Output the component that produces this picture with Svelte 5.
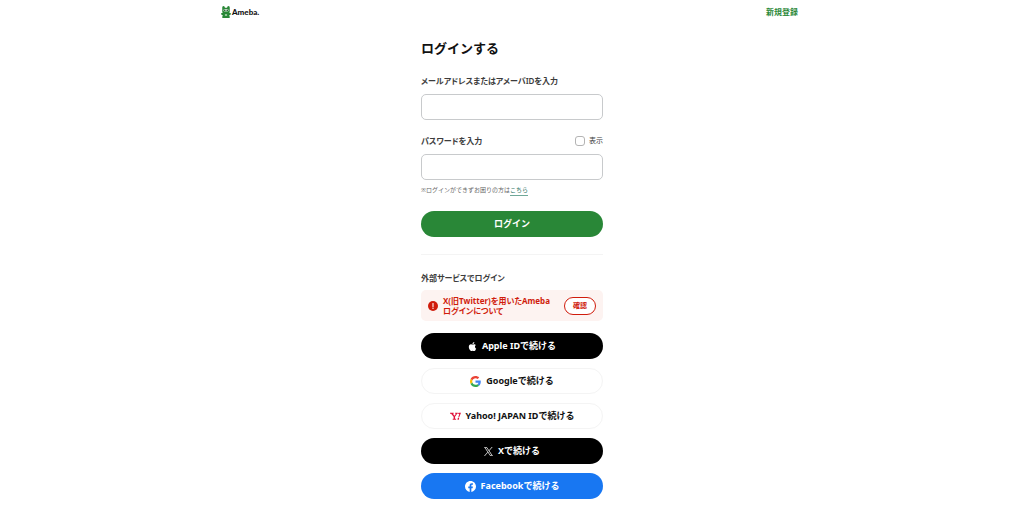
<script lang="ts">
	type Provider = {
		id: 'apple' | 'google' | 'yahoo' | 'x' | 'facebook';
		label: string;
	};

	const providers: Provider[] = [
		{ id: 'apple', label: 'Apple IDで続ける' },
		{ id: 'google', label: 'Googleで続ける' },
		{ id: 'yahoo', label: 'Yahoo! JAPAN IDで続ける' },
		{ id: 'x', label: 'Xで続ける' },
		{ id: 'facebook', label: 'Facebookで続ける' }
	];

	let account = $state('');
	let password = $state('');
	let showPassword = $state(false);

	function handleSubmit(event: SubmitEvent) {
		event.preventDefault();
	}
</script>

<div class="page" lang="ja">
	<header class="header">
		<a class="logo" href="/">
			<svg class="logo-mark" viewBox="0 0 20 24" aria-hidden="true">
				<path
					d="M5 0c1.600 0 2.600 1.500 2.800 3.500h4.400C12.400 1.500 13.400 0 15 0c1.700 0 2.500 1.600 2.500 3.500V11c0 1.200-.5 2-1.200 2.700l2.200.3c1 .2 1.500 1 1.300 2-.3 1.300-1.500 2-3.300 2l1 4c.3 1.300-.4 2-1.500 2H4c-1.100 0-1.800-.7-1.500-2l1-4c-1.800 0-3-.7-3.300-2-.2-1 .3-1.800 1.300-2l2.200-.3C3 13 2.500 12.200 2.500 11V3.500C2.500 1.600 3.300 0 5 0z"
					fill="#298737"
				/>
				<rect x="5" y="6" width="10" height="5" rx="2.500" fill="#cfe6d2" />
				<circle cx="7.500" cy="8.500" r="1.500" fill="#17401e" />
				<circle cx="12.500" cy="8.500" r="1.500" fill="#17401e" />
				<ellipse cx="10" cy="18" rx="2.500" ry="2" fill="#a5d0aa" />
			</svg>
			<span>Ameba.</span>
		</a>
		<a class="signup" href="/signup">新規登録</a>
	</header>

	<main class="login">
		<h1>ログインする</h1>

		<form onsubmit={handleSubmit}>
			<div class="label-row">
				<label for="account">メールアドレスまたはアメーバIDを入力</label>
			</div>
			<input id="account" class="field" type="text" bind:value={account} />

			<div class="label-row second">
				<label for="password">パスワードを入力</label>
				<label class="show">
					<input type="checkbox" bind:checked={showPassword} />
					表示
				</label>
			</div>
			<input
				id="password"
				class="field"
				type={showPassword ? 'text' : 'password'}
				bind:value={password}
			/>

			<p class="help">※ログインができずお困りの方は<a href="/help">こちら</a></p>
			<button class="pill submit" type="submit">ログイン</button>
		</form>

		<section class="external">
			<h2>外部サービスでログイン</h2>

			<div class="notice">
				<svg class="alert" viewBox="0 0 20 20" aria-hidden="true">
					<circle cx="10" cy="10" r="10" fill="#d01c0c" />
					<path d="M10 5v6" stroke="#fff" stroke-width="2.200" stroke-linecap="round" />
					<circle cx="10" cy="14.600" r="1.400" fill="#fff" />
				</svg>
				<p>X(旧Twitter)を用いたAmeba<br />ログインについて</p>
				<button class="confirm" type="button">確認</button>
			</div>

			<div class="providers">
				{#each providers as provider (provider.id)}
					<button class="pill {provider.id}" type="button">
						{#if provider.id === 'apple'}
							<svg class="icon small" viewBox="0 0 24 24" aria-hidden="true">
								<path
									fill="currentColor"
									d="M12.150 6.900c-.95 0-2.420-1.080-3.960-1.040-2.040.03-3.910 1.180-4.960 3.010-2.120 3.680-.55 9.100 1.520 12.090 1.010 1.450 2.210 3.090 3.790 3.040 1.520-.07 2.090-.99 3.940-.99 1.830 0 2.350.99 3.960.95 1.640-.03 2.680-1.480 3.680-2.950 1.160-1.690 1.640-3.320 1.660-3.410-.04-.01-3.180-1.220-3.220-4.860-.03-3.040 2.480-4.490 2.600-4.560-1.430-2.090-3.620-2.320-4.390-2.380-2-.16-3.680 1.090-4.610 1.090zM15.530 3.830c.84-1.010 1.400-2.430 1.250-3.830-1.210.05-2.660.81-3.530 1.820-.78.9-1.450 2.340-1.270 3.710 1.340.1 2.710-.69 3.560-1.700"
								/>
							</svg>
						{:else if provider.id === 'google'}
							<svg class="icon" viewBox="0 0 48 48" aria-hidden="true">
								<path fill="#ea4335" d="M24 9.500c3.540 0 6.710 1.220 9.210 3.600l6.850-6.850C35.900 2.380 30.470 0 24 0 14.620 0 6.510 5.380 2.560 13.220l7.980 6.190C12.430 13.720 17.740 9.500 24 9.500z" />
								<path fill="#4285f4" d="M46.980 24.550c0-1.570-.15-3.090-.38-4.550H24v9.020h12.940c-.58 2.960-2.260 5.480-4.780 7.180l7.730 6c4.510-4.180 7.090-10.360 7.090-17.650z" />
								<path fill="#fbbc05" d="M10.530 28.590c-.48-1.450-.76-2.990-.76-4.590s.27-3.140.76-4.590l-7.980-6.190C.92 16.460 0 20.120 0 24s.92 7.540 2.560 10.780l7.970-6.190z" />
								<path fill="#34a853" d="M24 48c6.480 0 11.930-2.130 15.890-5.810l-7.730-6c-2.150 1.450-4.920 2.300-8.160 2.300-6.260 0-11.570-4.220-13.470-9.910l-7.980 6.190C6.510 42.620 14.620 48 24 48z" />
							</svg>
						{:else if provider.id === 'yahoo'}
							<svg class="icon" viewBox="0 0 24 18" aria-hidden="true">
								<path
									fill="#e0103a"
									d="M0 1h8v2H6.500l3.200 4.500L13 3h-1.800V1H17v2h-1.400L11 9.500V14h2.300v2H5.900v-2h2V9.700L2.300 3H0z"
								/>
								<path fill="#e0103a" d="M18.500 1H24l-4.200 10h-2L20.300 3.300h-2.600zM17 12.500h3l-.7 3.500h-3z" />
							</svg>
						{:else if provider.id === 'x'}
							<svg class="icon small" viewBox="0 0 24 24" aria-hidden="true">
								<path
									fill="currentColor"
									d="M14.230 10.160 22.980 0h-2.070l-7.600 8.820L7.250 0H.25l9.170 13.340L.25 24h2.070l8.020-9.320L16.750 24h7l-9.520-13.840zm-2.840 3.300-.93-1.330L3.070 1.560h3.180l5.970 8.530.93 1.330 7.760 11.090h-3.180l-6.340-9.050z"
								/>
							</svg>
						{:else}
							<svg class="icon" viewBox="0 0 24 24" aria-hidden="true">
								<path
									fill="currentColor"
									d="M24 12.070C24 5.410 18.630 0 12 0S0 5.410 0 12.070C0 18.100 4.390 23.090 10.130 24v-8.440H7.080v-3.490h3.050V9.410c0-3.020 1.790-4.690 4.530-4.690 1.310 0 2.680.23 2.680.23v2.970h-1.510c-1.490 0-1.960.93-1.960 1.890v2.260h3.330l-.53 3.490h-2.800V24C19.610 23.090 24 18.100 24 12.070z"
								/>
							</svg>
						{/if}
						<span>{provider.label}</span>
					</button>
				{/each}
			</div>
		</section>
	</main>
</div>

<style>
	:global(body) {
		background: #fff;
	}

	.page,
	button,
	input {
		font-family: 'Noto Sans', 'Noto Sans CJK JP', sans-serif;
	}

	.page {
		color: #3c3c3c;
		font-size: 8px;
		line-height: 12px;
	}

	h1,
	h2,
	p {
		margin: 0;
	}

	button {
		cursor: pointer;
	}

	.header {
		box-sizing: border-box;
		display: flex;
		align-items: center;
		justify-content: space-between;
		max-width: 582px;
		height: 24px;
		margin: 0 auto;
		padding-right: 5px;
	}

	.header a {
		text-decoration: none;
	}

	.logo {
		display: flex;
		align-items: center;
		gap: 1px;
		color: #111;
		font-family: Lato, 'Noto Sans', sans-serif;
		font-weight: 900;
	}

	.logo-mark {
		width: 10px;
		height: 12px;
	}

	.signup {
		color: #298737;
		font-weight: 700;
	}

	.login {
		max-width: 182px;
		margin: 0 auto;
		padding: 14px 0;
	}

	h1 {
		color: #111;
		font-size: 13px;
		font-weight: 700;
		line-height: 20px;
		margin-bottom: 17px;
	}

	h2,
	.label-row {
		font-size: 8px;
		font-weight: 600;
		font-feature-settings: 'palt';
		line-height: 12px;
	}

	.label-row {
		display: flex;
		align-items: center;
		justify-content: space-between;
		margin-bottom: 7px;
	}

	.label-row.second {
		margin-top: 15px;
	}

	.show {
		display: flex;
		align-items: center;
		gap: 4px;
		font-size: 7px;
		font-weight: 400;
	}

	.show input {
		appearance: none;
		width: 10px;
		height: 10px;
		margin: 0;
		border: 1px solid #b4b4b4;
		border-radius: 3px;
		background: #fff;
	}

	.show input:checked {
		background: #298737;
	}

	.field {
		box-sizing: border-box;
		display: block;
		width: 100%;
		height: 26px;
		padding: 0 8px;
		border: 1px solid #c8cacc;
		border-radius: 5px;
		background: #fff;
		font-size: 9px;
	}

	.help {
		margin-top: 5px;
		color: #666;
		font-size: 6px;
		line-height: 10px;
	}

	.help a {
		display: inline-block;
		border-bottom: 1px solid #6fa898;
		color: #2f7466;
		text-decoration: none;
	}

	.pill {
		display: flex;
		align-items: center;
		justify-content: center;
		gap: 5px;
		width: 100%;
		height: 26px;
		padding: 0;
		border: 0;
		border-radius: 13px;
		color: #fff;
		font-size: 9px;
		font-weight: 700;
		line-height: 14px;
	}

	.submit {
		margin-top: 15px;
		background: #298737;
	}

	.external {
		margin-top: 17px;
		padding-top: 17px;
		border-top: 1px solid #f4f4f4;
	}

	.notice {
		display: flex;
		align-items: center;
		gap: 5px;
		min-height: 31px;
		margin-top: 6px;
		padding: 0 7px;
		border-radius: 5px;
		background: #fdf3f1;
		color: #d01c0c;
	}

	.notice p {
		flex: 1;
		font-weight: 700;
		font-feature-settings: 'palt';
		line-height: 10px;
		white-space: nowrap;
	}

	.alert {
		width: 10px;
		height: 10px;
	}

	.confirm {
		width: 32px;
		height: 18px;
		padding: 0;
		border: 1px solid #d01c0c;
		border-radius: 9px;
		background: #fff;
		color: #d01c0c;
		font-size: 7px;
		font-weight: 700;
		line-height: 10px;
	}

	.providers {
		display: grid;
		gap: 9px;
		margin-top: 12px;
	}

	.icon {
		width: 11px;
		height: 11px;
	}

	.icon.small {
		width: 9px;
		height: 9px;
	}

	.apple,
	.x {
		background: #000;
	}

	.google,
	.yahoo {
		border: 1px solid #f4f4f4;
		background: #fff;
		color: #111;
	}

	.facebook {
		background: #1877f2;
	}
</style>
